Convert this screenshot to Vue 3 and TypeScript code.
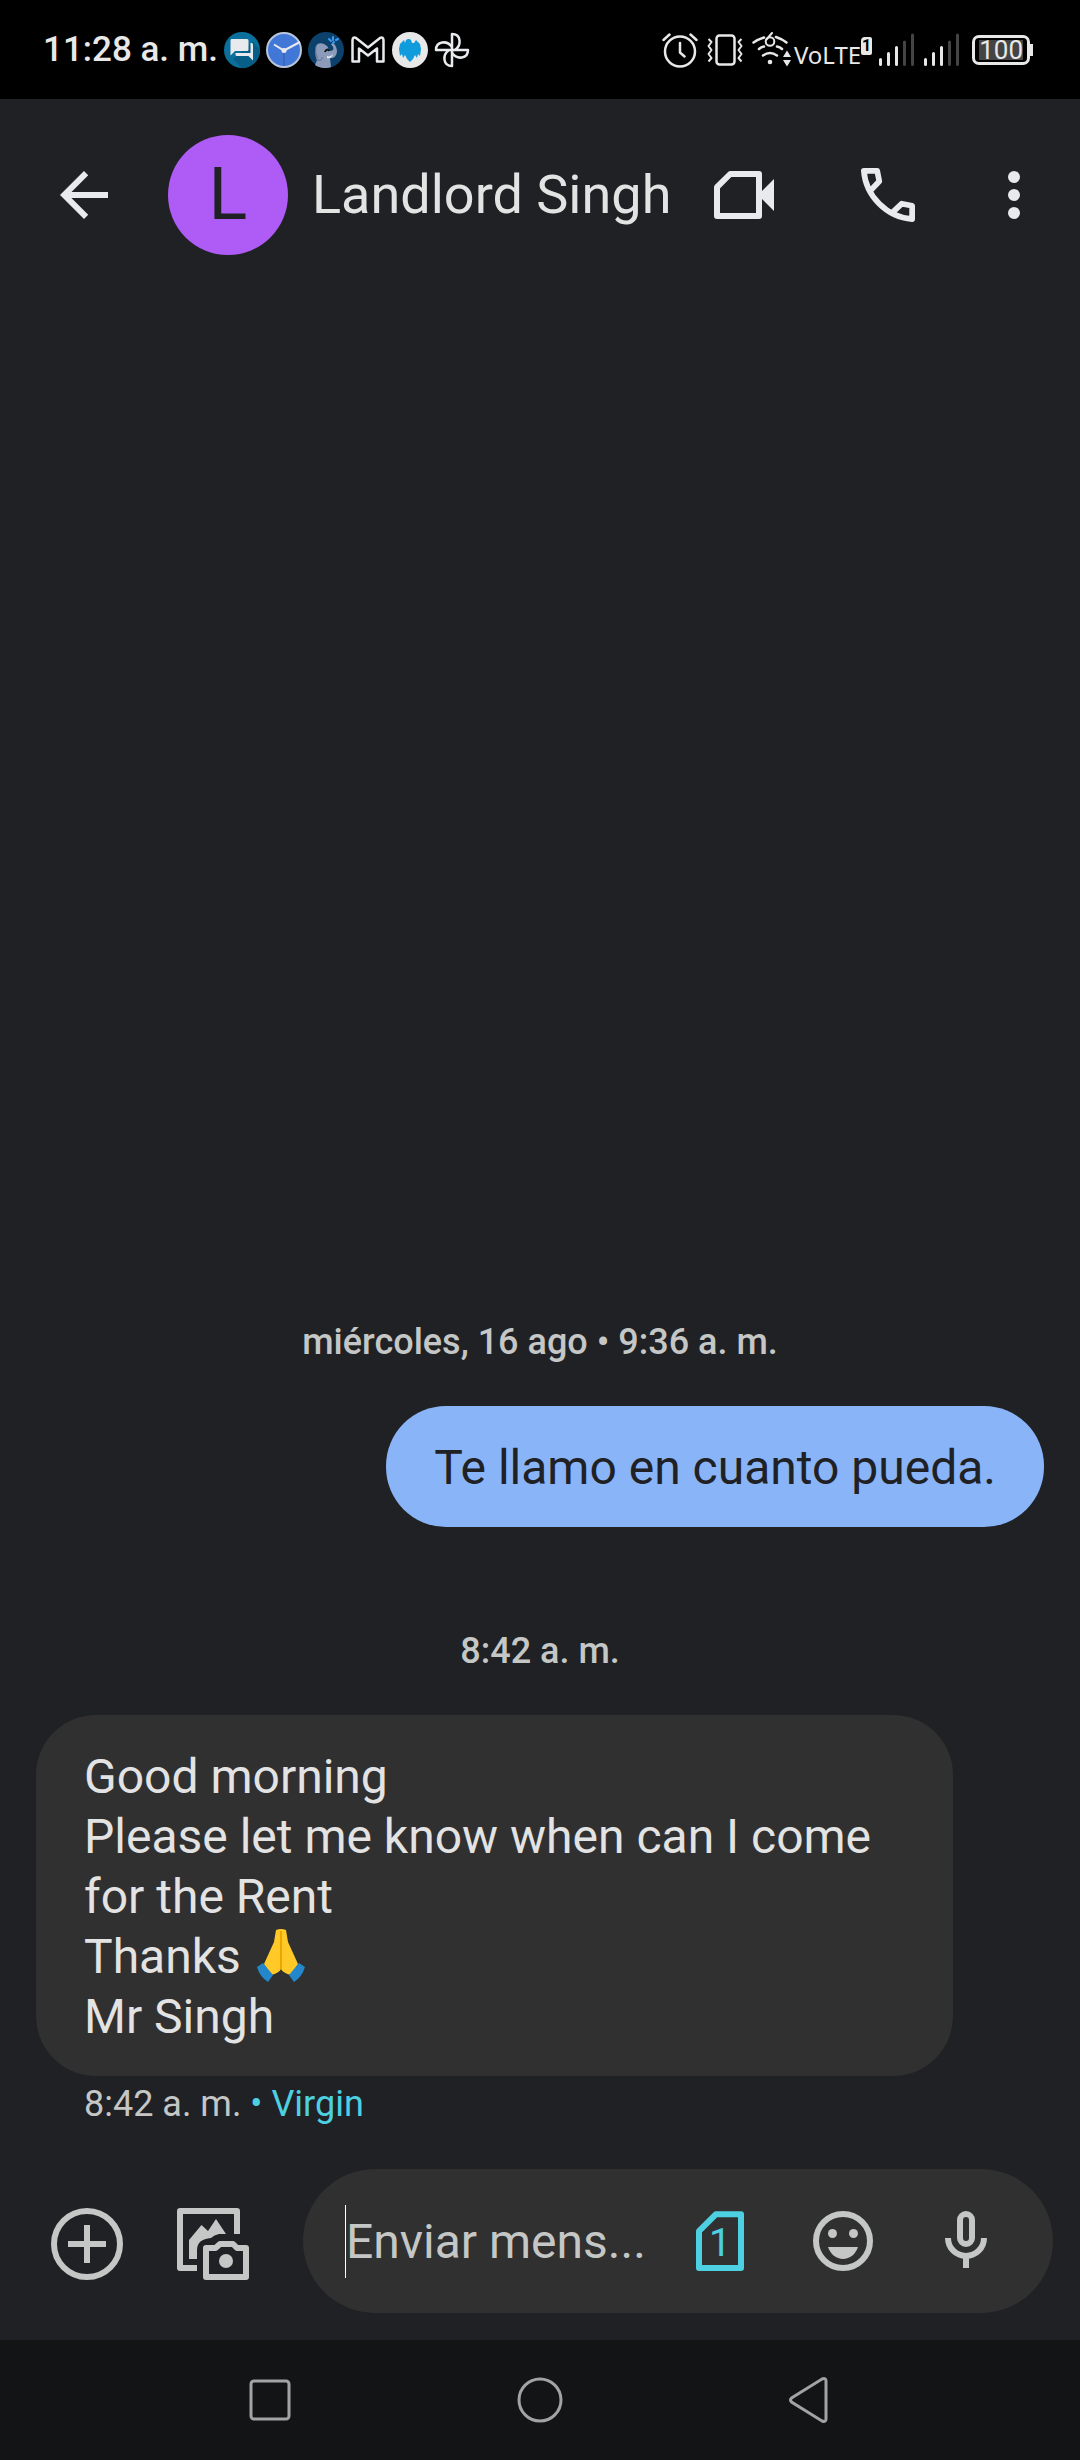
<script setup lang="ts">
import { ref } from 'vue'

interface Message {
  id: number
  stamp: string
  lines: string[]
  outgoing: boolean
  time?: string
  carrier?: string
}

const contact = 'Landlord Singh'
const draft = ref('')

// This character in a line is drawn as the praying-hands picture
const PRAY = '🙏'

const messages: Message[] = [
  {
    id: 1,
    stamp: 'miércoles, 16 ago • 9:36 a. m.',
    lines: ['Te llamo en cuanto pueda.'],
    outgoing: true,
  },
  {
    id: 2,
    stamp: '8:42 a. m.',
    lines: ['Good morning', 'Please let me know when can I come for the Rent', 'Thanks ' + PRAY, 'Mr Singh'],
    outgoing: false,
    time: '8:42 a. m.',
    carrier: 'Virgin',
  },
]
</script>

<template>
  <div class="screen">
    <div class="status">
      <div class="status-left">
        <time class="clock">11:28 a. m.</time>
        <svg width="36" height="36" viewBox="0 0 36 36" aria-hidden="true">
          <circle cx="18" cy="18" r="18" fill="#0b6f9c" />
          <path d="M29 10 36 18A18 18 0 0 1 18 36L9 27z" fill="#075f87" />
          <path d="M7.500 7h15.500a1.500 1.500 0 0 1 1.500 1.500v9a1.500 1.500 0 0 1-1.500 1.500H11l-4.500 4.500V8.500a1.500 1.500 0 0 1 1-1.500z" fill="#e8eaed" />
          <path d="M26.500 11h1a1.500 1.500 0 0 1 1.500 1.500V28.500l-4.500-4.500H13a1.500 1.500 0 0 1-1.500-1.500V21h15z" fill="#e8eaed" />
        </svg>
        <svg width="36" height="36" viewBox="0 0 36 36" aria-hidden="true">
          <circle cx="18" cy="18" r="17" fill="#4178d8" stroke="#b9c6dc" stroke-width="2" />
          <path d="M18 19v15" stroke="#3a69be" stroke-width="2" />
          <path d="M8 12.500 18 18.500 34 10" fill="none" stroke="#e8eaed" stroke-width="2" />
          <circle cx="18" cy="18.500" r="2.500" fill="#e8eaed" />
        </svg>
        <svg width="36" height="36" viewBox="0 0 36 36" aria-hidden="true">
          <circle cx="18" cy="18" r="18" fill="#0c416c" />
          <path d="M8 15c0-3 4-5 8-3l3 2c2 2 1 5 3 5 3 0 4-2 3-4l-2-3 2-1c3 2 4 6 4 9-1 5-4 7-7 6l1 9c-5 2-12 1-16-2l2-5c-2-3-2-9-1-13z" fill="#8b9bb9" />
          <path d="M8 14c-1 5 0 9 1 10v4c3 1 6 0 5-3" fill="none" stroke="#5d709a" stroke-width="1" />
          <path d="M19 24c2 1 4 0 6-2-1 4-4 5-6 4z" fill="#e8eaed" />
          <path d="M17 20c1-3 3-3 4-1" fill="none" stroke="#111" stroke-width="2" />
          <path d="M21 7l2 2M25 5v3M28 8l2-1M25 11l1-1" stroke="#3a9bf0" stroke-width="2" stroke-linecap="round" />
        </svg>
        <svg width="36" height="36" viewBox="0 0 36 36" aria-hidden="true">
          <path d="M2.500 29.500V8.500Q2.500 4.500 6 6L18 15.500 30 6Q33.500 4.500 33.500 8.500V29.500H27V16.500L18 23.500 9 16.500V29.500Z" fill="none" stroke="#e8eaed" stroke-width="2.500" stroke-linejoin="round" />
        </svg>
        <svg width="36" height="36" viewBox="0 0 36 36" aria-hidden="true">
          <circle cx="18" cy="18" r="18" fill="#e8e8e8" />
          <path d="M14 8c2-1.500 4-1 5 0l1 3 2 0 2-3 4 4 1 5-1 7-2-2-1 4-2-3-2 4-3 3-3-3-2-4-2 3-1-4-2 2-1-7 1-5 4-4 1 3z" fill="#109cdc" />
        </svg>
        <svg width="36" height="36" viewBox="0 0 36 36" aria-hidden="true">
          <g fill="none" stroke="#e8eaed" stroke-width="2.500" stroke-linejoin="round">
            <path d="M18 18V2C27 2 28 13 21 18" />
            <path d="M18 18H34C34 27 23 28 18 21" />
            <path d="M18 18V34C9 34 8 23 15 18" />
            <path d="M18 18H2C2 9 13 8 18 15" />
          </g>
        </svg>
      </div>
      <div class="status-right">
        <svg width="36" height="36" viewBox="0 0 36 36" aria-hidden="true">
          <g fill="none" stroke="#e8e8e8" stroke-width="2.500" stroke-linecap="round" stroke-linejoin="round">
            <circle cx="18" cy="19.500" r="15" />
            <path d="M18 11v9.500l4.500 4M1.500 8 7.500 2.500M34.500 8 28.500 2.500" />
          </g>
        </svg>
        <svg width="36" height="36" viewBox="0 0 36 36" aria-hidden="true">
          <g fill="none" stroke="#e8e8e8" stroke-width="2.500" stroke-linejoin="round">
            <rect x="9.500" y="3.500" width="18" height="29" rx="3" />
            <path d="M1.500 7 4.500 10 1.500 14 4.500 18 1.500 22 4.500 26 1.500 29.500M34.500 7 31.500 10 34.500 14 31.500 18 34.500 22 31.500 26 34.500 29.500" stroke-width="2" />
          </g>
        </svg>
        <svg width="40" height="36" viewBox="0 0 40 36" aria-hidden="true">
          <g fill="none" stroke="#e8e8e8" stroke-width="2.500" stroke-linecap="round">
            <path d="M1.500 10.500Q6 7.500 12 5.500M24 5Q30 7 34.500 10.500M7 17Q9 15 12 14.500M25 14.500Q28 15 30 17M11 23.500Q18 18.500 25 23.500" />
            <circle cx="18" cy="9.500" r="4.300" stroke-width="2" />
            <path d="M14.500 7.500 20 1" stroke-width="2" />
          </g>
          <circle cx="18" cy="30" r="2.300" fill="#e8e8e8" />
          <path d="M35 18.500 39 25H31zM35 34.500 39 28H31z" fill="#e8e8e8" />
        </svg>
        <span class="volte">VoLTE</span>
        <span class="sim-badge">1</span>
        <svg v-for="n in 2" :key="n" class="signal" width="36" height="34" viewBox="0 0 36 34" aria-hidden="true">
          <path d="M1.500 26.500v5M9.500 20.500v11M17.500 14.500v17" stroke="#e8e8e8" stroke-width="3" stroke-linecap="round" />
          <path d="M25.500 9v22.500M33.500 2v29.500" stroke="#444" stroke-width="3" stroke-linecap="round" />
        </svg>
        <span class="battery"><span class="charge">100</span></span>
      </div>
    </div>

    <header class="topbar">
      <button type="button" class="icon back" aria-label="Atrás">
        <svg viewBox="0 0 24 24"><path d="M20 11H7.830l5.590-5.590L12 4l-8 8 8 8 1.410-1.410L7.830 13H20z" fill="currentColor" /></svg>
      </button>
      <div class="avatar">L</div>
      <h1 class="name">{{ contact }}</h1>
      <div class="actions">
        <button type="button" class="icon" aria-label="Videollamada">
          <svg viewBox="0 0 24 24">
            <path d="M7.400 5H17V19H3V9.400Z" fill="none" stroke="currentColor" stroke-width="2" stroke-linejoin="round" />
            <path d="M22 6.700 16.700 12 22 17.300z" fill="currentColor" />
          </svg>
        </button>
        <button type="button" class="icon" aria-label="Llamar">
          <svg viewBox="0 0 24 24">
            <path d="M6.400 10.300 9.100 7.400 8.400 3.950H3.950C4.600 12.400 11.600 19.400 20.050 20.050V15.600L16.600 14.900 13.700 17.600" fill="none" stroke="currentColor" stroke-width="1.900" stroke-linejoin="round" />
          </svg>
        </button>
        <button type="button" class="icon more" aria-label="Más opciones">
          <svg viewBox="6 0 12 24">
            <g fill="currentColor"><circle cx="12" cy="6" r="2" /><circle cx="12" cy="12" r="2" /><circle cx="12" cy="18" r="2" /></g>
          </svg>
        </button>
      </div>
    </header>

    <main class="thread">
      <article v-for="m in messages" :key="m.id" class="message" :class="{ outgoing: m.outgoing }">
        <time class="stamp">{{ m.stamp }}</time>
        <div class="bubble">
          <p v-for="line in m.lines" :key="line">
            {{ line.replace(PRAY, '') }}
            <svg v-if="line.includes(PRAY)" class="emoji" viewBox="0 0 48 54" role="img" aria-label="🙏">
              <path d="M19 1Q24-1 29 1L31 13 41 35 34 46Q26 44 24 40 22 44 14 46L7 35 17 13Z" fill="#ffca28" />
              <path d="M24 2V40" stroke="#eda600" stroke-width="2" />
              <path d="M6 34 16 46 11 53Q3 48 0 38ZM42 34 32 46 37 53Q45 48 48 38Z" fill="#2487cc" />
            </svg>
          </p>
        </div>
        <p v-if="m.time" class="meta">{{ m.time }} <span class="carrier">• {{ m.carrier }}</span></p>
      </article>
    </main>

    <form class="compose" @submit.prevent>
      <div class="tools">
        <button type="button" class="icon" aria-label="Adjuntar">
          <svg viewBox="0 0 72 72">
            <g fill="none" stroke="currentColor" stroke-width="6"><circle cx="36" cy="36" r="33" /><path d="M17 36h38M36 17v38" /></g>
          </svg>
        </button>
        <button type="button" class="icon" aria-label="Galería y cámara">
          <svg viewBox="0 0 72 72">
            <g fill="none" stroke="currentColor" stroke-width="6" stroke-linejoin="round">
              <path d="M20 60H3V3H60V26" />
              <path d="M29 40H38.500L43 36H56L60 40H69V69H29Z" />
            </g>
            <path d="M12 51V32L24.500 17 31 23 39 11 49 26H42Q37 27 34 30 20 31 20 42V51Z" fill="currentColor" />
            <circle cx="49" cy="53" r="7" fill="currentColor" />
          </svg>
        </button>
      </div>
      <div class="field">
        <input v-model="draft" type="text" placeholder="Enviar mens..." aria-label="Enviar mensaje" />
        <div class="field-actions">
          <button type="button" class="icon sim" aria-label="SIM 1">
            <svg viewBox="0 0 24 24">
              <path d="M10.600 3.100H19V21H5V8.700Z" fill="none" stroke="currentColor" stroke-width="2" stroke-linejoin="round" />
              <text x="12" y="17" font-size="13" text-anchor="middle" fill="currentColor">1</text>
            </svg>
          </button>
          <button type="button" class="icon" aria-label="Emojis">
            <svg viewBox="0 0 24 24">
              <circle cx="12" cy="12" r="9" fill="none" stroke="currentColor" stroke-width="2" />
              <g fill="currentColor"><circle cx="8.500" cy="9.500" r="1.500" /><circle cx="15.500" cy="9.500" r="1.500" /><path d="M12 18c2.280 0 4.220-1.660 5-4H7c.780 2.340 2.720 4 5 4z" /></g>
            </svg>
          </button>
          <button type="button" class="icon" aria-label="Mensaje de voz">
            <svg viewBox="0 0 24 24">
              <g fill="none" stroke="currentColor" stroke-width="2"><rect x="10" y="3" width="4" height="10" rx="2" /><path d="M6 11a6 6 0 0 0 12 0M12 17v4" /></g>
            </svg>
          </button>
        </div>
      </div>
    </form>

    <nav class="navbar">
      <button type="button" aria-label="Recientes">
        <svg viewBox="0 0 48 48"><rect x="5" y="5" width="38" height="38" rx="3" /></svg>
      </button>
      <button type="button" aria-label="Inicio">
        <svg viewBox="0 0 48 48"><circle cx="24" cy="24" r="21" /></svg>
      </button>
      <button type="button" aria-label="Volver">
        <svg viewBox="0 0 48 48"><path d="M5.500 22 36 3Q40 1.500 40 5V43Q40 46.500 36 45L5.500 26Q3.500 24 5.500 22Z" /></svg>
      </button>
    </nav>
  </div>
</template>

<style>
body {
  background: #202124;
}
</style>

<style scoped>
.screen {
  display: flex;
  flex-direction: column;
  min-height: 100vh;
  background: #202124;
  color: #e3e3e3;
  font-family: Roboto, 'Liberation Sans', sans-serif;
}

button {
  padding: 0;
  border: 0;
  background: none;
  color: inherit;
  font: inherit;
}

svg {
  display: block;
  flex: none;
}

p,
h1 {
  margin: 0;
}

.status {
  display: flex;
  align-items: center;
  justify-content: space-between;
  height: 99px;
  padding: 0 47px 0 43px;
  background: #000;
  color: #e8e8e8;
}

.status-left,
.status-right {
  display: flex;
  align-items: center;
}

.status-left {
  gap: 6px;
}

.clock {
  font-size: 35px;
  font-weight: 500;
  line-height: 48px;
}

.status-right svg {
  margin-right: 9px;
}

.status-right svg:nth-of-type(3) {
  margin-right: 2px;
}

.volte {
  padding-top: 10px;
  font-family: 'Noto Sans', sans-serif;
  font-size: 24px;
  line-height: 36px;
}

.sim-badge {
  width: 11px;
  margin-right: 7px;
  margin-bottom: 8px;
  border-radius: 4px 2px 2px 2px;
  background: #e8e8e8;
  color: #000;
  font-size: 16px;
  font-weight: 700;
  line-height: 18px;
  text-align: center;
}

.battery {
  position: relative;
  margin: 0 3px;
  padding: 2px 4px;
  border: 3px solid #e8e8e8;
  border-radius: 7px;
}

.battery::after {
  content: '';
  position: absolute;
  top: 6px;
  right: -6px;
  width: 3px;
  height: 12px;
  background: #e8e8e8;
}

.charge {
  display: block;
  background: #444;
  font-size: 26px;
  line-height: 20px;
}

.icon {
  flex: none;
  width: 72px;
  height: 72px;
}

.icon svg {
  width: 100%;
  height: 100%;
}

.topbar {
  display: flex;
  align-items: center;
  height: 192px;
  padding: 0 48px;
}

.back,
.actions {
  color: #e8eaed;
}

.avatar {
  flex: none;
  width: 120px;
  margin: 0 24px 0 48px;
  border-radius: 50%;
  background: #af5cf7;
  color: #202124;
  font-size: 72px;
  line-height: 120px;
  text-align: center;
}

.name {
  flex: 1;
  min-width: 0;
  font-size: 54px;
  font-weight: 400;
  line-height: 72px;
  white-space: nowrap;
}

.actions {
  display: flex;
  gap: 72px;
}

.icon.more {
  width: 36px;
}

.thread {
  display: flex;
  flex: 1;
  flex-direction: column;
  justify-content: flex-end;
  gap: 100px;
  padding: 0 36px 41px;
}

.message {
  display: flex;
  flex-direction: column;
  align-items: flex-start;
}

.stamp {
  align-self: center;
  margin-bottom: 40px;
  color: #c4c7c5;
  font-size: 36px;
  font-weight: 500;
  line-height: 48px;
}

.bubble {
  box-sizing: border-box;
  max-width: 91%;
  padding: 32px 48px 29px;
  border-radius: 60px;
  background: #303030;
  font-size: 48px;
  line-height: 60px;
}

.outgoing .bubble {
  align-self: flex-end;
  background: #8ab4f8;
  color: #202124;
}

.emoji {
  display: inline-block;
  width: 48px;
  height: 54px;
  margin-top: -10px;
  margin-left: 4px;
  vertical-align: -10px;
}

.meta {
  margin: 4px 48px 0;
  color: #c4c7c5;
  font-size: 36px;
  line-height: 48px;
}

.carrier,
.sim {
  color: #4dd0e1;
}

.compose {
  display: flex;
  align-items: center;
  gap: 54px;
  padding: 0 27px 27px 51px;
}

.tools {
  display: flex;
  gap: 54px;
  padding-top: 6px;
  color: #c4c7c5;
}

.field {
  display: flex;
  flex: 1;
  align-items: center;
  gap: 24px;
  min-width: 0;
  height: 144px;
  padding: 0 51px 0 42px;
  border-radius: 72px;
  background: #303030;
  color: #c4c7c5;
}

.field-actions {
  display: flex;
  gap: 51px;
}

input {
  box-sizing: border-box;
  flex: 1;
  min-width: 0;
  height: 73px;
  padding: 0;
  border: 0;
  border-left: 1px solid #fff;
  outline: 0;
  background: none;
  color: #e3e3e3;
  font: inherit;
  font-size: 48px;
}

input::placeholder {
  color: #c4c7c5;
  opacity: 1;
}

.navbar {
  display: flex;
  align-items: center;
  justify-content: space-around;
  height: 120px;
  padding: 0 12.5%;
  background: #131416;
}

.navbar svg {
  width: 48px;
  height: 48px;
  fill: none;
  stroke: #a3a3a3;
  stroke-width: 3px;
}
</style>
